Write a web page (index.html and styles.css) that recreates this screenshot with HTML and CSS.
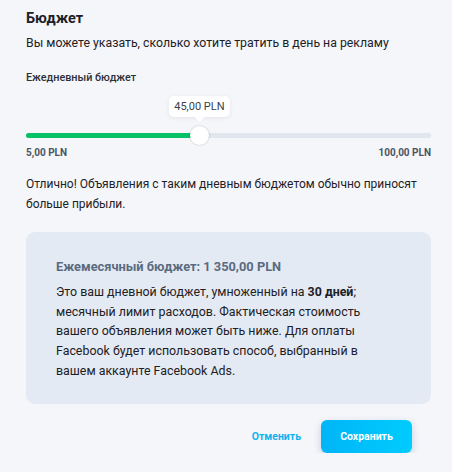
FILE: index.html
```
<!DOCTYPE html>
<html lang="ru">
<head>
  <meta charset="UTF-8">
  <meta name="viewport" content="width=device-width, initial-scale=1.0">
  <title>Бюджет</title>
  <link rel="stylesheet" href="styles.css">
</head>
<body>
  <div class="panel">
    <h2 class="title">Бюджет</h2>
    <p class="subtitle">Вы можете указать, сколько хотите тратить в день на рекламу</p>

    <div class="label">Ежедневный бюджет</div>

    <div class="slider">
      <div class="track">
        <div class="fill" style="width: 42.7%;">
          <div class="thumb">
            <div class="tip">45,00 PLN</div>
          </div>
        </div>
      </div>
      <div class="limits">
        <span>5,00 PLN</span>
        <span>100,00 PLN</span>
      </div>
    </div>

    <p class="hint">Отлично! Объявления с таким дневным бюджетом обычно приносят больше прибыли.</p>

    <div class="info">
      <h3>Ежемесячный бюджет: 1 350,00 PLN</h3>
      <p>Это ваш дневной бюджет, умноженный на <b>30 дней</b>; месячный лимит расходов. Фактическая стоимость вашего объявления может быть ниже. Для оплаты Facebook будет использовать способ, выбранный в вашем аккаунте Facebook Ads.</p>
    </div>

    <div class="actions">
      <button type="button" class="btn-link">Отменить</button>
      <button type="button" class="btn-save">Сохранить</button>
    </div>
  </div>
</body>
</html>
```

FILE: styles.css
```
body { margin: 0; background: #f5f6fa; font-family: Roboto, "Noto Sans", sans-serif; color: #1d2125; }
.panel { padding: 9px 21px 0 26px; }
.title { margin: 0; font-size: 14.5px; font-weight: 700; line-height: 20px; }
.subtitle { margin: 4px 0 0; font-size: 12.3px; line-height: 20px; }
.label { margin-top: 18px; font-size: 10.8px; font-weight: 500; color: #2c3038; line-height: 14px; }
.slider { margin-top: 48px; }
.track { height: 5px; background: #e1e6ee; border-radius: 3px; }
.fill { position: relative; height: 5px; background: #05c168; border-radius: 3px; }
.thumb { position: absolute; right: -10px; top: -7px; width: 19px; height: 19px; background: #fff; border-radius: 50%; box-shadow: 0 0 2px rgba(0,0,0,0.25); }
.tip { position: absolute; bottom: 28px; left: 50%; transform: translateX(-50%); background: #fff; padding: 4px 5px; border-radius: 5px; font-size: 11px; line-height: 13px; color: #3a3f47; white-space: nowrap; box-shadow: 0 1px 4px rgba(0,0,0,0.08); }
.tip::after { content: ""; position: absolute; left: 50%; bottom: -5px; margin-left: -5px; border-left: 5px solid transparent; border-right: 5px solid transparent; border-top: 5px solid #fff; }
.limits { display: flex; justify-content: space-between; margin-top: 9px; font-size: 10px; font-weight: 700; color: #4b5563; }
.hint { margin: 16px 0 0; font-size: 12px; line-height: 20px; }
.info { margin-top: 18px; background: #e4eaf3; border-radius: 9px; padding: 26px 60px 23px 30px; }
.info h3 { margin: 0; font-size: 12.8px; font-weight: 700; color: #5a6a7f; line-height: 18px; }
.info p { margin: 6px 0 0; font-size: 12.4px; line-height: 19.7px; }
.actions { display: flex; justify-content: flex-end; align-items: center; gap: 20px; margin-top: 16px; padding-right: 19px; }
.btn-link { background: none; border: none; padding: 0; font-family: inherit; font-size: 10.5px; font-weight: 700; color: #12b2ef; cursor: pointer; }
.btn-save { width: 91px; height: 33px; border: none; border-radius: 6px; background: linear-gradient(90deg, #00b5f7, #00ccfe); color: #fff; font-family: inherit; font-size: 10.5px; font-weight: 700; box-shadow: 0 3px 8px rgba(0,60,100,0.2); cursor: pointer; }
```
